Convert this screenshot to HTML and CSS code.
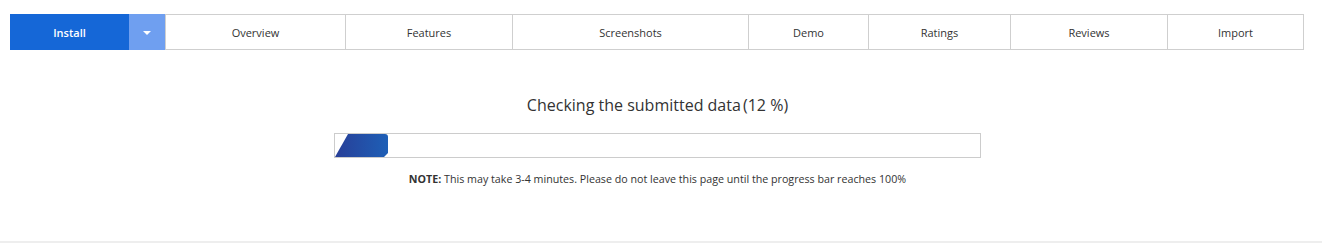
FILE: index.html
```
<!DOCTYPE html>
<html>
<head>
<meta charset="utf-8">
<link rel="stylesheet" href="styles.css">
</head>
<body>
<div class="page">
  <nav class="tabs">
    <div class="tab install">Install</div>
    <div class="tab caret"><span class="tri"></span></div>
    <div class="tab w-overview">Overview</div>
    <div class="tab w-features">Features</div>
    <div class="tab w-screens">Screenshots</div>
    <div class="tab w-demo">Demo</div>
    <div class="tab w-ratings">Ratings</div>
    <div class="tab w-reviews">Reviews</div>
    <div class="tab w-import">Import</div>
  </nav>
  <section class="progress-area">
    <h2 class="title">Checking the submitted data <span class="pct">(12 %)</span></h2>
    <div class="bar"><div class="fill"></div></div>
    <p class="note"><b>NOTE:</b> This may take 3-4 minutes. Please do not leave this page until the progress bar reaches 100%</p>
  </section>
</div>
</body>
</html>
```
FILE: styles.css
```
html, body { margin: 0; padding: 0; background: #fff; }
body { font-family: "Open Sans", "Noto Sans", sans-serif; color: #333; }
.page { width: 1322px; height: 243px; box-sizing: border-box; border-bottom: 2px solid #eeeeee; padding-top: 14px; }
.tabs { display: flex; margin-left: 10px; width: 1294px; height: 36px; box-sizing: border-box; border: 1px solid #cfcfcf; }
.tab { display: flex; align-items: center; justify-content: center; font-size: 11px; color: #333; border-left: 1px solid #cfcfcf; box-sizing: border-box; height: 100%; }
.install { width: 119px; background: #1567d7; color: #fff; font-weight: 600; border-left: none; margin: -1px 0 -1px -1px; height: calc(100% + 2px); }
.caret { width: 36px; background: #6f9ff0; border-left: none; margin: -1px 0; height: calc(100% + 2px); }
.tri { width: 0; height: 0; border-left: 4px solid transparent; border-right: 4px solid transparent; border-top: 4px solid #fff; margin-top: 1px; }
.w-overview { width: 180px; border-left: 1px solid #cfcfcf; }
.w-features { width: 167px; }
.w-screens { width: 236px; }
.w-demo { width: 120px; }
.w-ratings { width: 142px; }
.w-reviews { width: 157px; }
.w-import { flex: 1; }
.progress-area { display: flex; flex-direction: column; align-items: center; padding-right: 7px; }
.title { margin: 44px 0 0; font-size: 16px; font-weight: 400; color: #333; line-height: 22px; }
.pct { margin-left: -2px; }
.bar { margin-top: 17px; width: 647px; height: 25px; box-sizing: border-box; border: 1px solid #cccccc; background: #fff; }
.fill { width: 53px; height: 100%; background: linear-gradient(90deg, #283f98, #1e5fb6); clip-path: polygon(13px 0, 100% 0, 100% 19px, 49px 100%, 0 100%); border-radius: 0 3px 0 0; }
.note { margin: 14px 0 0; font-size: 10.7px; color: #333; line-height: 14px; }
.note b { font-weight: 700; }
```
